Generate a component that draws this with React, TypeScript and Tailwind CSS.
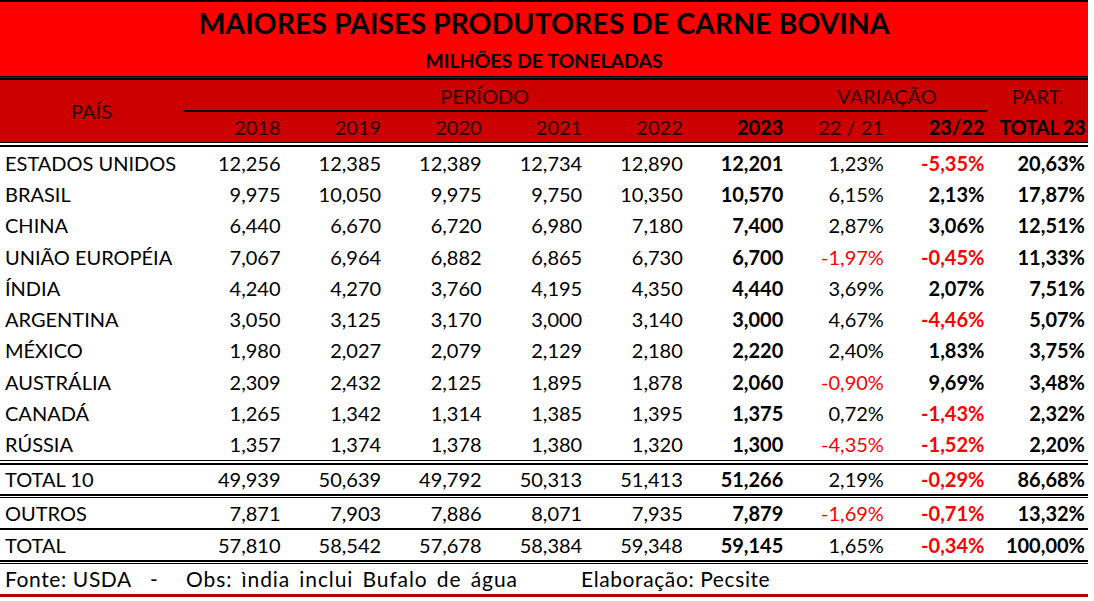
import React from "react";

type Row = {
  name: string;
  years: string[];
  y2023: string;
  v2221: string;
  v2322: string;
  part: string;
};

const COUNTRIES: Row[] = [
  { name: "ESTADOS UNIDOS", years: ["12,256", "12,385", "12,389", "12,734", "12,890"], y2023: "12,201", v2221: "1,23%", v2322: "-5,35%", part: "20,63%" },
  { name: "BRASIL", years: ["9,975", "10,050", "9,975", "9,750", "10,350"], y2023: "10,570", v2221: "6,15%", v2322: "2,13%", part: "17,87%" },
  { name: "CHINA", years: ["6,440", "6,670", "6,720", "6,980", "7,180"], y2023: "7,400", v2221: "2,87%", v2322: "3,06%", part: "12,51%" },
  { name: "UNIÃO EUROPÉIA", years: ["7,067", "6,964", "6,882", "6,865", "6,730"], y2023: "6,700", v2221: "-1,97%", v2322: "-0,45%", part: "11,33%" },
  { name: "ÍNDIA", years: ["4,240", "4,270", "3,760", "4,195", "4,350"], y2023: "4,440", v2221: "3,69%", v2322: "2,07%", part: "7,51%" },
  { name: "ARGENTINA", years: ["3,050", "3,125", "3,170", "3,000", "3,140"], y2023: "3,000", v2221: "4,67%", v2322: "-4,46%", part: "5,07%" },
  { name: "MÉXICO", years: ["1,980", "2,027", "2,079", "2,129", "2,180"], y2023: "2,220", v2221: "2,40%", v2322: "1,83%", part: "3,75%" },
  { name: "AUSTRÁLIA", years: ["2,309", "2,432", "2,125", "1,895", "1,878"], y2023: "2,060", v2221: "-0,90%", v2322: "9,69%", part: "3,48%" },
  { name: "CANADÁ", years: ["1,265", "1,342", "1,314", "1,385", "1,395"], y2023: "1,375", v2221: "0,72%", v2322: "-1,43%", part: "2,32%" },
  { name: "RÚSSIA", years: ["1,357", "1,374", "1,378", "1,380", "1,320"], y2023: "1,300", v2221: "-4,35%", v2322: "-1,52%", part: "2,20%" },
];

const TOTAL10: Row = { name: "TOTAL 10", years: ["49,939", "50,639", "49,792", "50,313", "51,413"], y2023: "51,266", v2221: "2,19%", v2322: "-0,29%", part: "86,68%" };
const OUTROS: Row = { name: "OUTROS", years: ["7,871", "7,903", "7,886", "8,071", "7,935"], y2023: "7,879", v2221: "-1,69%", v2322: "-0,71%", part: "13,32%" };
const TOTAL: Row = { name: "TOTAL", years: ["57,810", "58,542", "57,678", "58,384", "59,348"], y2023: "59,145", v2221: "1,65%", v2322: "-0,34%", part: "100,00%" };

const GRID = "grid grid-cols-[183px_repeat(9,minmax(0,1fr))] items-center";

function DataRow({ row, height }: { row: Row; height: string }) {
  const neg = (v: string) => v.startsWith("-");
  return (
    <div className={`${GRID} ${height} text-[20px] leading-none text-black`}>
      <div className="pl-[5px]">{row.name}</div>
      {row.years.map((y, i) => (
        <div key={i} className="pr-[3px] text-right">
          {y}
        </div>
      ))}
      <div className="pr-[3px] text-right font-bold">{row.y2023}</div>
      <div className={`pr-[3px] text-right ${neg(row.v2221) ? "text-[#ff0000]" : ""}`}>{row.v2221}</div>
      <div className={`pr-[3px] text-right font-bold ${neg(row.v2322) ? "text-[#ff0000]" : ""}`}>{row.v2322}</div>
      <div className="pr-[3px] text-right font-bold">{row.part}</div>
    </div>
  );
}

export default function App() {
  return (
    <div className="h-[601px] w-[1094px] bg-white font-['Lato',sans-serif]">
      <div className="w-[1088px]">
        {/* Title band */}
        <div className="flex h-[76px] flex-col items-center border-t-2 border-black bg-[#ff0000]">
          <div className="mt-[4px] text-[28.5px] font-bold leading-[34px] text-black">
            MAIORES PAISES PRODUTORES DE CARNE BOVINA
          </div>
          <div className="mt-[9px] text-[19.5px] font-bold leading-[24px] text-black">
            MILHÕES DE TONELADAS
          </div>
        </div>
        <div className="h-[4px] border-t border-b-2 border-black bg-[#7a0000]" />

        {/* Header */}
        <div className="grid h-[62px] grid-cols-[183px_repeat(9,minmax(0,1fr))] grid-rows-[30px_2px_30px] bg-[#cc0000] text-[20px] leading-none text-[#2e0000]">
          <div className="row-span-3 flex items-center justify-center">PAÍS</div>
          <div className="col-span-6 flex items-center justify-center pt-[2px]">PERÍODO</div>
          <div className="col-span-2 flex items-center justify-center pt-[2px]">VARIAÇÃO</div>
          <div className="flex items-center justify-center pt-[2px]">PART.</div>
          <div className="col-span-8 bg-[#1a0000]" />
          <div className="col-start-10 row-start-2" />
          {["2018", "2019", "2020", "2021", "2022"].map((y) => (
            <div key={y} className="flex items-center justify-end pr-[3px]">
              {y}
            </div>
          ))}
          <div className="flex items-center justify-end pr-[3px] font-bold text-black">2023</div>
          <div className="flex items-center justify-end pr-[3px]">22 / 21</div>
          <div className="flex items-center justify-end pr-[3px] font-bold text-black">23/22</div>
          <div className="flex items-center justify-end pr-[3px] font-bold tracking-[-0.5px] text-black">TOTAL 23</div>
        </div>
        <div className="h-[5px] border-t border-b-2 border-black" />

        {/* Countries */}
        {COUNTRIES.map((r) => (
          <DataRow key={r.name} row={r} height="h-[31.3px]" />
        ))}
        <div className="h-[5px] border-t border-b-2 border-black" />
        <DataRow row={TOTAL10} height="h-[29px]" />
        <div className="h-[4px] border-t-2 border-b border-black" />
        <DataRow row={OUTROS} height="h-[30px]" />
        <div className="h-[2px] bg-black" />
        <DataRow row={TOTAL} height="h-[30px]" />
        <div className="h-[4px] border-t-2 border-b border-black" />

        {/* Footer */}
        <div className="flex h-[30px] items-center text-[21px] leading-none tracking-[0.6px] text-black">
          <span className="w-[150px] shrink-0 pl-[5px]">Fonte: USDA</span>
          <span className="w-[36px] shrink-0">-</span>
          <span className="w-[395px] shrink-0 tracking-[0.9px] [word-spacing:3px]">
            Obs: ìndia inclui Bufalo de água
          </span>
          <span>Elaboração: Pecsite</span>
        </div>
        <div className="h-[3px] bg-[#b00000]" />
      </div>
    </div>
  );
}
